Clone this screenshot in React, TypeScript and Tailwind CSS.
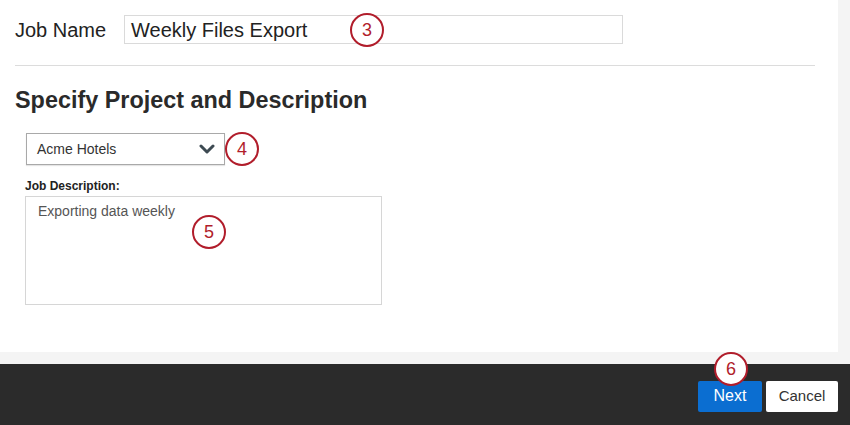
import React from "react";

function Marker({ n, className }: { n: number; className: string }) {
  return (
    <div
      className={
        "absolute flex h-[34px] w-[34px] items-center justify-center rounded-full border-[2.5px] border-[#b11d2b] bg-white text-[18px] text-[#b11d2b] " +
        className
      }
    >
      {n}
    </div>
  );
}

export default function App() {
  return (
    <div className="relative flex h-[425px] w-[850px] flex-col overflow-hidden bg-[#f4f4f4] font-['Liberation_Sans',Arial,sans-serif] text-[#333]">
      <div className="h-[352px] w-[838px] bg-white px-[15px]">
        <div className="mr-[8px] flex h-[66px] items-start border-b border-[#dcdcdc] pt-[15px]">
          <label className="w-[109px] pt-[3px] text-[20px] leading-[24px] text-[#222]">Job Name</label>
          <div className="flex h-[29px] w-[499px] items-center border border-[#dadada] px-[6px] text-[20px] text-[#222]">
            Weekly Files Export
          </div>
        </div>
        <h2 className="mt-[21px] text-[23.4px] font-bold leading-[26px] text-[#2a2a2a]">
          Specify Project and Description
        </h2>
        <div className="ml-[11px] mt-[20px] flex h-[32px] w-[199px] items-center justify-between border border-[#a9a9a9] pl-[10px] pr-[9px] text-[14px] text-[#333] shadow-[0_1px_1px_rgba(0,0,0,0.1)]">
          <span>Acme Hotels</span>
          <svg width="16" height="12" viewBox="0 0 16 12">
            <path d="M2 3l6 6 6-6" fill="none" stroke="#3d4a52" strokeWidth="3" strokeLinecap="round" strokeLinejoin="round" />
          </svg>
        </div>
        <div className="ml-[10px] mt-[12px] text-[12px] font-bold text-[#222]">Job Description:</div>
        <div className="ml-[10px] mt-[1px] h-[109px] w-[357px] border border-[#d6d6d6] px-[12px] pt-[4px] text-[14px] text-[#555]">
          Exporting data weekly
        </div>
      </div>
      <div className="mt-[12px] flex flex-1 items-center justify-end gap-[4px] bg-[#2b2b2b] pr-[12px] pt-[3px]">
        <button className="h-[31px] w-[64px] rounded-[2px] bg-[#0b6ed1] text-[16px] text-white">Next</button>
        <button className="h-[31px] w-[72px] rounded-[2px] bg-white text-[15px] text-[#333]">Cancel</button>
      </div>
      <Marker n={3} className="left-[350px] top-[13px]" />
      <Marker n={4} className="left-[225px] top-[132px]" />
      <Marker n={5} className="left-[192px] top-[215px]" />
      <Marker n={6} className="left-[714px] top-[352px]" />
    </div>
  );
}
